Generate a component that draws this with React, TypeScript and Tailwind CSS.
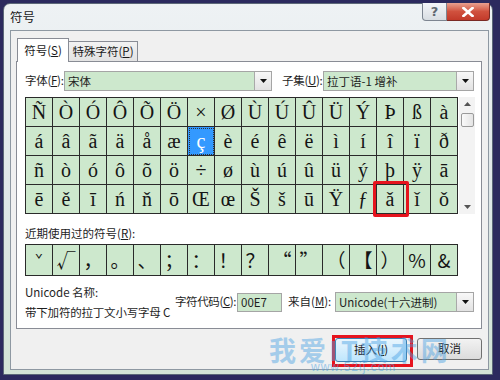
import React from "react";

const rows: string[][] = [
  ["Ñ", "Ò", "Ó", "Ô", "Õ", "Ö", "×", "Ø", "Ù", "Ú", "Û", "Ü", "Ý", "Þ", "ß", "à"],
  ["á", "â", "ã", "ä", "å", "æ", "ç", "è", "é", "ê", "ë", "ì", "í", "î", "ï", "ð"],
  ["ñ", "ò", "ó", "ô", "õ", "ö", "÷", "ø", "ù", "ú", "û", "ü", "ý", "þ", "ÿ", "ā"],
  ["ē", "ě", "ī", "ń", "ň", "ō", "Œ", "œ", "Š", "š", "ū", "Ÿ", "ƒ", "ǎ", "ǐ", "ǒ"],
];

const recent = ["ˇ", "√", "，", "。", "、", "；", "：", "！", "？", "“", "”", "（", "【", "）", "%", "&"];

const ui = { fontFamily: '"Noto Sans CJK SC", "Noto Sans", sans-serif' };
const serif = { fontFamily: '"Liberation Serif", "Noto Sans CJK SC", serif' };

function DropArrow() {
  return (
    <div className="w-[17px] h-full flex items-center justify-center border-l border-[#a9a9a9] bg-gradient-to-b from-[#f8f8f8] to-[#e2e2e2]">
      <svg width="7" height="4" viewBox="0 0 7 4">
        <path d="M0 0 L7 0 L3.5 4 Z" fill="#111" />
      </svg>
    </div>
  );
}

export default function App() {
  return (
    <div className="w-[500px] h-[380px] bg-[#2c2a5e] pt-[3px] pl-[3px] overflow-hidden" style={ui}>
      <div className="relative w-[490px] h-[372px] rounded-t-[7px] border border-[#5c6878] bg-gradient-to-b from-[#eef2f4] via-[#dfe7e8] to-[#d3e4d6] flex flex-col">
        {/* title bar */}
        <div className="h-[26px] flex items-center pl-[6px] text-[12.5px] text-[#1a1a1a]">符号</div>
        <div className="absolute top-[-1px] right-[2px] flex">
          <div className="w-[25px] h-[18px] rounded-bl-[4px] border border-[#7d8590] border-t-0 bg-gradient-to-b from-[#f4f6f8] to-[#d8dde2] flex items-center justify-center text-[13px] font-bold text-[#606870]" style={{ fontFamily: '"DejaVu Sans", sans-serif' }}>
            ?
          </div>
          <div className="w-[43px] h-[18px] rounded-br-[4px] border border-[#7a2a24] border-t-0 border-l-0 bg-gradient-to-b from-[#e8a090] via-[#d0513e] to-[#c23a2a] flex items-center justify-center">
            <svg width="12" height="10" viewBox="0 0 12 10">
              <path d="M1.5 1 L10.5 9 M10.5 1 L1.5 9" stroke="#fff" strokeWidth="2.6" strokeLinecap="square" />
            </svg>
          </div>
        </div>

        {/* client area */}
        <div className="ml-[6px] w-[479px] h-[340px] border border-[#8e98a2] bg-[#f0f0f0] flex flex-col">
          {/* tabs */}
          <div className="flex items-end pl-[6px] pt-[6px] h-[30px] whitespace-nowrap">
            <div className="relative z-10 w-[52px] h-[24px] -mb-[1px] bg-white border border-b-0 border-[#898c95] flex items-center justify-center text-[11.5px] text-[#1a1a1a]">
              符号(<u>S</u>)
            </div>
            <div className="w-[69px] h-[20px] bg-gradient-to-b from-[#f2f2f2] to-[#e3e3e3] border border-l-0 border-b-0 border-[#898c95] flex items-center justify-center text-[11.5px] text-[#1a1a1a]">
              特殊字符(<u>P</u>)
            </div>
          </div>

          {/* tab panel */}
          <div className="ml-[5px] w-[466px] h-[268px] bg-white border border-[#898c95] pl-[8px] pt-[9px] flex flex-col text-[11.5px] text-[#1e1e1e] whitespace-nowrap">
            {/* font row */}
            <div className="flex items-center h-[20px]">
              <div className="w-[39px] shrink-0 tracking-[-0.3px]">字体(<u>F</u>):</div>
              <div className="w-[208px] shrink-0 h-[20px] border border-[#a5a5a5] bg-[#cde8cd] flex">
                <div className="flex-1 pl-[3px] leading-[18px]">宋体</div>
                <DropArrow />
              </div>
              <div className="ml-[10px] w-[41px] shrink-0 tracking-[-0.3px]">子集(<u>U</u>):</div>
              <div className="w-[151px] shrink-0 h-[20px] border border-[#a5a5a5] bg-[#cde8cd] flex">
                <div className="flex-1 pl-[3px] leading-[18px]">拉丁语-1 增补</div>
                <DropArrow />
              </div>
            </div>

            {/* symbol grid */}
            <div className="mt-[6px] flex">
              <div className="border-l border-t border-[#2a2a2a] w-[433px]">
                {rows.map((r, ri) => (
                  <div key={ri} className="flex">
                    {r.map((c, ci) => {
                      const sel = ri === 1 && ci === 6;
                      const marked = ri === 3 && ci === 13;
                      return (
                        <div
                          key={ci}
                          className={
                            "relative w-[27px] h-[29px] border-r border-b border-[#2a2a2a] flex items-center justify-center text-[20px] " +
                            (sel ? "bg-[#3399ff] text-white outline-1 outline-dotted outline-[#333] -outline-offset-2" : "bg-[#cde8cd] text-[#151515]") +
                            (marked ? " z-10" : "")
                          }
                          style={serif}
                        >
                          {c}
                          {marked && (
                            <div className="absolute -left-[4px] -top-[4px] w-[36px] h-[36px] border-[3px] border-[#e6141e] rounded-[2px]" />
                          )}
                        </div>
                      );
                    })}
                  </div>
                ))}
              </div>
              {/* scrollbar */}
              <div className="ml-[1px] w-[16px] h-[117px] bg-[#f3f3f3] flex flex-col items-center">
                <div className="h-[14px] flex items-center justify-center">
                  <svg width="7" height="4" viewBox="0 0 7 4">
                    <path d="M0 4 L7 4 L3.5 0 Z" fill="#555" />
                  </svg>
                </div>
                <div className="mt-[2px] w-[13px] h-[14px] rounded-[2px] border border-[#9a9a9a] bg-gradient-to-r from-[#fafafa] to-[#e4e4e4]" />
                <div className="flex-1" />
                <div className="h-[14px] flex items-center justify-center">
                  <svg width="7" height="4" viewBox="0 0 7 4">
                    <path d="M0 0 L7 0 L3.5 4 Z" fill="#555" />
                  </svg>
                </div>
              </div>
            </div>

            {/* recent */}
            <div className="mt-[11px] h-[16px] leading-[16px]">近期使用过的符号(<u>R</u>):</div>
            <div className="mt-[3px] flex w-[433px] border-l border-t border-[#2a2a2a]">
              {recent.map((c, i) => (
                <div
                  key={i}
                  className={
                    "w-[27px] h-[31px] border-r border-b border-[#2a2a2a] bg-[#cde8cd] flex justify-center text-[#151515] " +
                    (i === 0 ? "items-start pt-[4px] text-[13px]" : "items-center text-[19px]")
                  }
                  style={{ fontFamily: '"Noto Sans CJK SC", "Liberation Serif", serif' }}
                >
                  {c}
                </div>
              ))}
            </div>

            {/* unicode info */}
            <div className="mt-[6px] flex">
              <div className="w-[150px] shrink-0 flex flex-col">
                <div className="h-[20px] leading-[20px]">Unicode 名称:</div>
                <div className="h-[20px] leading-[20px] tracking-[-0.2px]">带下加符的拉丁文小写字母 C</div>
              </div>
              <div className="flex items-center self-center">
                <div className="w-[62px] shrink-0 tracking-[-0.4px]">字符代码(<u>C</u>):</div>
                <div className="w-[45px] shrink-0 h-[19px] border border-[#a5a5a5] bg-[#cde8cd] pl-[3px] leading-[17px]">00E7</div>
                <div className="ml-[6px] w-[47px] shrink-0">来自(<u>M</u>):</div>
                <div className="w-[139px] shrink-0 h-[20px] border border-[#a5a5a5] bg-[#cde8cd] flex">
                  <div className="flex-1 pl-[3px] leading-[18px]">Unicode(十六进制)</div>
                  <DropArrow />
                </div>
              </div>
            </div>
          </div>

          {/* buttons */}
          <div className="relative flex justify-end items-start pt-[9px] pr-[6px] gap-[10px] text-[11.5px] text-[#1a1a1a]">
            <div className="relative w-[72px] h-[24px] rounded-[3px] border border-[#3c7fb1] bg-gradient-to-b from-[#eaf6fd] to-[#bee6fd] flex items-center justify-center">
              插入(<u>I</u>)
              <div className="absolute -left-[4px] -top-[4px] w-[81px] h-[32px] border-[3px] border-[#e6141e]" />
            </div>
            <div className="w-[65px] h-[22px] rounded-[3px] border border-[#707070] bg-gradient-to-b from-[#f2f2f2] to-[#dcdcdc] flex items-center justify-center">
              取消
            </div>
            {/* watermark */}
            <div className="absolute left-[258px] top-[1px] text-[27px] font-bold text-[#4aa2e4] opacity-45 pointer-events-none whitespace-nowrap tracking-[3px]">
              我爱IT技术网
            </div>
            <div className="absolute left-[300px] top-[29px] text-[12px] text-[#4aa2e4] opacity-50 pointer-events-none tracking-[1px]" style={{ fontFamily: '"Liberation Sans", sans-serif' }}>
              www.52ij.com
            </div>
          </div>
        </div>
      </div>
    </div>
  );
}
